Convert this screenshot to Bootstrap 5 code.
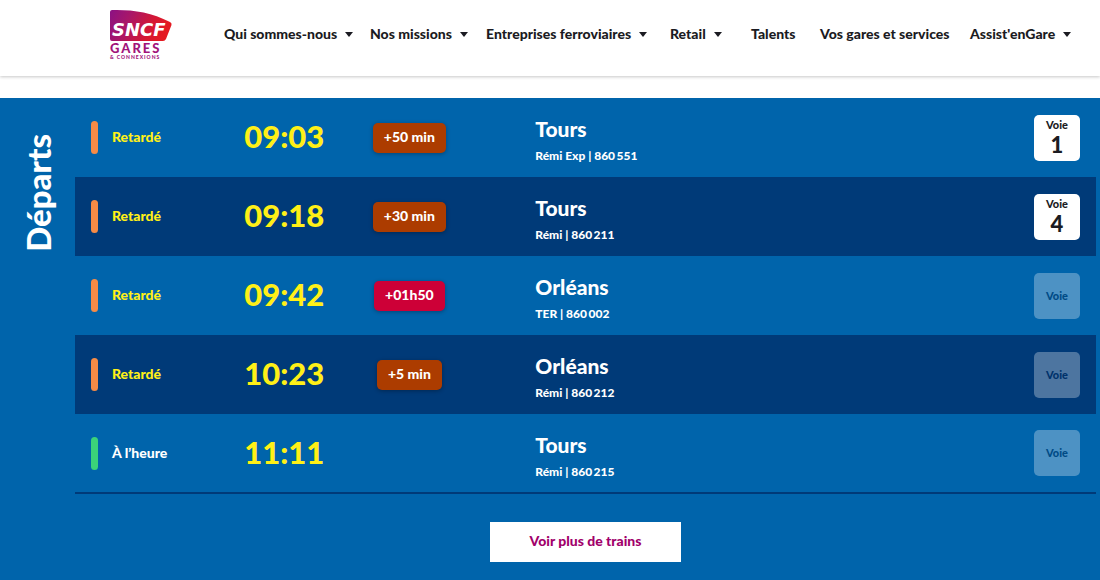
<!DOCTYPE html>
<html lang="fr">
<head>
<meta charset="utf-8">
<meta name="viewport" content="width=device-width, initial-scale=1">
<title>Départs - Gares &amp; Connexions</title>
<link href="https://cdn.jsdelivr.net/npm/bootstrap@5.3.0/dist/css/bootstrap.min.css" rel="stylesheet">
<style>
  :root { --board: #0064ab; --board-dark: #003a78; --late: #fff017; --plum: #a1006b; --ink: #1b1b22; }
  body { font-family: Lato, "Open Sans", sans-serif; font-weight: 900; background: #fff; color: var(--ink); }
  .site-header { height: 76px; box-shadow: 0 1px 3px rgba(0,0,0,.22); margin-bottom: 22px; padding: 0 27px 6px 109px; }
  .site-logo { width: 63px; flex: none; }
  .main-menu { display: grid; grid-template-columns: 146fr 116fr 184fr 81fr 69fr 150fr 103fr; margin: 0 0 2px 52px; }
  .main-menu a { font-size: 14px; line-height: 20px; color: var(--ink); text-decoration: none; white-space: nowrap; }
  .has-menu::after { content: ""; display: inline-block; margin-left: 8px; vertical-align: 2px; border: 4px solid transparent; border-top: 5px solid; border-bottom: 0; }
  .board { background: var(--board); color: #fff; min-height: calc(100vh - 98px); padding-right: 4px; }
  .board-side { width: 75px; flex: none; padding-top: 36px; }
  .board-side h2 { writing-mode: vertical-rl; transform: rotate(180deg); font-size: 33px; line-height: 40px; font-weight: 900; margin: 0; }
  .trains { table-layout: fixed; border-bottom: 2px solid var(--board-dark); }
  .trains td { height: 79px; padding: 0; }
  .trains tr:nth-child(even) { background: var(--board-dark); }
  .col-state { width: 15%; } .col-time { width: 11%; } .col-delay { width: 13.5%; } .col-track { width: 78px; }
  .state { color: var(--late); font-size: 14px; line-height: 20px; padding-left: 16px; }
  .state span { padding-bottom: 1px; }
  .state i { width: 7px; height: 33px; border-radius: 4px; background: #f68b46; margin-right: 14px; }
  .on-time { color: #fff; } .on-time i { background: #3bd27a; }
  .trains .hour { color: var(--late); font-size: 31px; line-height: 36px; padding-bottom: 3px; }
  .delay { display: inline-block; font-size: 14px; line-height: 20px; padding: 4px 11px 6px; border-radius: 5px; background: #ac3c00; box-shadow: 0 1px 4px rgba(0,0,0,.3); }
  .delay.long { background: #cd0037; }
  .trains .goal { padding-left: 57px; }
  .town { font-size: 21px; line-height: 28px; padding-top: 4px; }
  .train-no { font-size: 12px; line-height: 16px; margin-top: 5px; }
  .track { width: 46px; height: 46px; border-radius: 5px; background: #fff; color: var(--ink); font-size: 11px; line-height: 14px; }
  .track b { font-size: 22px; line-height: 26px; font-weight: 900; }
  .track.unknown { background: rgba(255,255,255,.3); color: #004b86; }
  .row-dark-track .track.unknown { color: #00326b; }
  .more { width: 191px; height: 40px; border: 0; background: #fff; color: var(--plum); font-size: 14px; line-height: 20px; padding-bottom: 3px; font-weight: 900; margin: 28px 0 18px; }
</style>
<script src="https://cdn.jsdelivr.net/npm/bootstrap@5.3.0/dist/js/bootstrap.bundle.min.js"></script>
</head>
<body>
<header class="site-header d-flex align-items-center">
  <a class="site-logo" href="#" aria-label="SNCF Gares et Connexions">
    <svg class="d-block" width="63" height="52" viewBox="0 0 63 52">
      <defs><linearGradient id="brand" x1="0" x2="1" y1="0" y2=".25"><stop offset="0" stop-color="#8b1184"/><stop offset=".35" stop-color="#a91668"/><stop offset=".75" stop-color="#d51834"/><stop offset="1" stop-color="#e41a22"/></linearGradient></defs>
      <path fill="url(#brand)" d="M3 1C23 .5 42 3 61 13q2 1 1.500 3L57 30q-1 2-3 2H3q-2 0-2-2V3q0-2 2-2z"/>
      <text x="3" y="27" font-family="DejaVu Sans, sans-serif" font-weight="700" font-style="italic" font-size="18" fill="#fff">SNCF</text>
      <text x="1" y="44" font-family="Lato, sans-serif" font-weight="900" font-size="13" letter-spacing="2" fill="#a1137a">GARES</text>
      <text x="1" y="50" font-family="Lato, sans-serif" font-weight="900" font-size="5" letter-spacing="1" fill="#a1137a">&amp; CONNEXIONS</text>
    </svg>
  </a>
  <nav class="main-menu flex-grow-1" aria-label="Menu principal">
    <a class="has-menu" href="#">Qui sommes-nous</a>
    <a class="has-menu" href="#">Nos missions</a>
    <a class="has-menu" href="#">Entreprises ferroviaires</a>
    <a class="has-menu" href="#">Retail</a>
    <a href="#">Talents</a>
    <a href="#">Vos gares et services</a>
    <a class="has-menu" href="#">Assist'enGare</a>
  </nav>
</header>
<main class="board d-flex">
  <div class="board-side d-flex justify-content-center align-items-start"><h2>Départs</h2></div>
  <div class="flex-grow-1 text-center">
    <table class="trains w-100 align-middle">
      <colgroup><col class="col-state"><col class="col-time"><col class="col-delay"><col><col class="col-track"></colgroup>
      <tbody>
        <tr>
          <td><div class="state d-flex align-items-center"><i></i><span>Retardé</span></div></td>
          <td class="hour">09:03</td>
          <td><span class="delay">+50 min</span></td>
          <td class="goal text-start"><div class="town">Tours</div><div class="train-no">Rémi Exp | 860&#8201;551</div></td>
          <td><div class="track d-flex flex-column align-items-center justify-content-center ms-3">Voie<b>1</b></div></td>
        </tr>
        <tr>
          <td><div class="state d-flex align-items-center"><i></i><span>Retardé</span></div></td>
          <td class="hour">09:18</td>
          <td><span class="delay">+30 min</span></td>
          <td class="goal text-start"><div class="town">Tours</div><div class="train-no">Rémi | 860&#8201;211</div></td>
          <td><div class="track d-flex flex-column align-items-center justify-content-center ms-3">Voie<b>4</b></div></td>
        </tr>
        <tr>
          <td><div class="state d-flex align-items-center"><i></i><span>Retardé</span></div></td>
          <td class="hour">09:42</td>
          <td><span class="delay long">+01h50</span></td>
          <td class="goal text-start"><div class="town">Orléans</div><div class="train-no">TER | 860&#8201;002</div></td>
          <td><div class="track unknown d-flex align-items-center justify-content-center ms-3">Voie</div></td>
        </tr>
        <tr class="row-dark-track">
          <td><div class="state d-flex align-items-center"><i></i><span>Retardé</span></div></td>
          <td class="hour">10:23</td>
          <td><span class="delay">+5 min</span></td>
          <td class="goal text-start"><div class="town">Orléans</div><div class="train-no">Rémi | 860&#8201;212</div></td>
          <td><div class="track unknown d-flex align-items-center justify-content-center ms-3">Voie</div></td>
        </tr>
        <tr>
          <td><div class="state on-time d-flex align-items-center"><i></i><span>À l’heure</span></div></td>
          <td class="hour">11:11</td>
          <td></td>
          <td class="goal text-start"><div class="town">Tours</div><div class="train-no">Rémi | 860&#8201;215</div></td>
          <td><div class="track unknown d-flex align-items-center justify-content-center ms-3">Voie</div></td>
        </tr>
      </tbody>
    </table>
    <button type="button" class="more">Voir plus de trains</button>
  </div>
</main>
</body>
</html>
